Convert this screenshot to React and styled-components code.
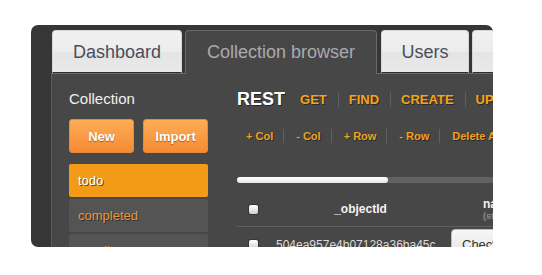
import React from "react";
import styled, { createGlobalStyle } from "styled-components";

const Global = createGlobalStyle`
  html, body { margin: 0; padding: 0; background: #ffffff; }
  body { font-family: "Liberation Sans", Arial, sans-serif; }
  * { box-sizing: border-box; }
`;

const Frame = styled.div`
  margin: 25px 0 0 31px;
  width: 462px;
  height: 222px;
  border-radius: 7px;
  overflow: hidden;
  background: #363636;
  padding-left: 20px;
  display: flex;
  flex-direction: column;
`;

const TabBar = styled.div`
  display: flex;
  align-items: flex-end;
  height: 48px;
  padding: 5px 0 0 1px;
  flex-shrink: 0;
`;

const Tab = styled.div`
  flex-shrink: 0;
  width: ${(p) => p.$w}px;
  margin-right: ${(p) => p.$gap}px;
  height: ${(p) => (p.$active ? 44 : 43)}px;
  margin-bottom: ${(p) => (p.$active ? -1 : 0)}px;
  position: relative;
  z-index: ${(p) => (p.$active ? 2 : 1)};
  border-radius: 4px 4px 0 0;
  font-size: 18px;
  line-height: 42px;
  text-align: ${(p) => (p.$pad ? "left" : "center")};
  padding-left: ${(p) => p.$pad || 0}px;
  white-space: nowrap;
  color: ${(p) => (p.$active ? "#a9aab1" : "#4a4e5b")};
  background: ${(p) =>
    p.$active
      ? "#474747"
      : "linear-gradient(#f1f1f1 0%, #ececec 50%, #e4e4e4 52%, #e9e9e9 100%)"};
  border: 1px solid ${(p) => (p.$active ? "#6a6a6a" : "#d6d6d6")};
  border-bottom: ${(p) => (p.$active ? "none" : "1px solid #2e2e2e")};
`;

const Panel = styled.div`
  flex: 1;
  min-height: 0;
  background: #474747;
  border-left: 1px solid #5b5b5b;
  border-top: 1px solid #6a6a6a;
  display: flex;
  gap: 29px;
  padding: 16px 0 0 17px;
`;

const Sidebar = styled.div`
  width: 139px;
  flex-shrink: 0;
  display: flex;
  flex-direction: column;
`;

const SideTitle = styled.div`
  font-size: 15px;
  line-height: 18px;
  color: #f0f0f0;
  margin-bottom: 11px;
`;

const ButtonRow = styled.div`
  display: flex;
  gap: 9px;
  margin-bottom: 11px;
`;

const OrangeButton = styled.button`
  width: 65px;
  height: 34px;
  border-radius: 3px;
  border: 1px solid #e88a3a;
  background: linear-gradient(#fdae57, #f68a34);
  color: #ffffff;
  font-family: "Liberation Sans", Arial, sans-serif;
  font-weight: bold;
  font-size: 13px;
  text-shadow: 0 1px 1px rgba(90, 40, 0, 0.55);
  padding: 0;
`;

const List = styled.div`
  display: flex;
  flex-direction: column;
  gap: 2px;
`;

const ListItem = styled.div`
  height: 33px;
  border-radius: 2px;
  padding-left: 9px;
  display: flex;
  align-items: center;
  font-size: 13px;
  background: ${(p) => (p.$active ? "#f39a16" : "#545454")};
  color: ${(p) => (p.$active ? "#ffffff" : "#eb9635")};
  text-shadow: 1px 1px 0 rgba(30, 30, 30, 0.7);
`;

const Main = styled.div`
  flex: 1;
  min-width: 0;
  display: flex;
  flex-direction: column;
  white-space: nowrap;
`;

const RestRow = styled.div`
  display: flex;
  align-items: center;
  height: 18px;
`;

const RestLabel = styled.span`
  font-size: 18px;
  font-weight: bold;
  color: #ffffff;
  text-shadow: 1px 1px 0 #262626;
  margin-right: 15px;
`;

const Method = styled.span`
  font-size: 13px;
  font-weight: bold;
  color: #f7a414;
  text-shadow: 1px 1px 0 #2a2a2a;
`;

const Sep = styled.span`
  flex-shrink: 0;
  width: 1px;
  height: ${(p) => p.$h}px;
  background: #606060;
  margin: 0 ${(p) => p.$r}px 0 ${(p) => p.$l}px;
`;

const ActionRow = styled.div`
  display: flex;
  align-items: center;
  height: 14px;
  margin-top: 21px;
  padding-left: 9px;
`;

const Action = styled.span`
  font-size: 11px;
  font-weight: bold;
  color: #f2a01c;
  text-shadow: 1px 1px 0 #2a2a2a;
`;

const Track = styled.div`
  margin-top: 34px;
  height: 6px;
  border-radius: 3px;
  background: #626262;
  width: 300px;
  flex-shrink: 0;
`;

const Fill = styled.div`
  height: 6px;
  border-radius: 3px;
  background: linear-gradient(#ffffff, #e6e6e6);
`;

const TableRow = styled.div`
  display: grid;
  grid-template-columns: 33px 181px 140px;
  align-items: center;
  height: ${(p) => p.$h}px;
  flex-shrink: 0;
  border-bottom: ${(p) => (p.$header ? "1px solid #5f5f5f" : "none")};
  margin-top: ${(p) => (p.$header ? 9 : 0)}px;
  width: 360px;
`;

const Box = styled.span`
  justify-self: center;
  width: 9px;
  height: 9px;
  border-radius: 2px;
  background: linear-gradient(#ffffff, #cfcfcf);
  box-shadow: 0 0 0 1px rgba(0, 0, 0, 0.25);
`;

const HeadCell = styled.div`
  font-size: 12px;
  font-weight: bold;
  color: #f2f2f2;
  text-align: ${(p) => (p.$center ? "center" : "left")};
  padding-left: ${(p) => p.$pad || 0}px;
  line-height: 14px;
`;

const TypeNote = styled.div`
  font-size: 9px;
  font-weight: bold;
  line-height: 11px;
  color: #8a8a8a;
`;

const IdCell = styled.div`
  font-size: 12px;
  color: #dcdcdc;
  padding-left: 6px;
  padding-top: 2px;
`;

const CheckButton = styled.button`
  justify-self: start;
  align-self: start;
  margin-top: 2px;
  height: 30px;
  padding: 0 10px;
  border-radius: 4px;
  border: 1px solid #bdbdbd;
  background: linear-gradient(#f6f6f6, #e4e4e4);
  color: #333;
  font-family: "Liberation Sans", Arial, sans-serif;
  font-size: 13px;
`;

const tabs = [
  { label: "Dashboard", w: 130, gap: 3 },
  { label: "Collection browser", w: 192, gap: 4, active: true },
  { label: "Users", w: 88, gap: 3 },
  { label: "Settings", w: 100, gap: 0, pad: 26 },
];

const methods = ["GET", "FIND", "CREATE", "UPDATE", "DELETE"];
const actions = ["+ Col", "- Col", "+ Row", "- Row", "Delete All"];
const collections = ["todo", "completed", "pending"];

export default function App() {
  return (
    <>
      <Global />
      <Frame>
        <TabBar>
          {tabs.map((t) => (
            <Tab key={t.label} $w={t.w} $gap={t.gap} $active={t.active} $pad={t.pad}>
              {t.label}
            </Tab>
          ))}
        </TabBar>
        <Panel>
          <Sidebar>
            <SideTitle>Collection</SideTitle>
            <ButtonRow>
              <OrangeButton>New</OrangeButton>
              <OrangeButton>Import</OrangeButton>
            </ButtonRow>
            <List>
              {collections.map((c, i) => (
                <ListItem key={c} $active={i === 0}>
                  {c}
                </ListItem>
              ))}
            </List>
          </Sidebar>
          <Main>
            <RestRow>
              <RestLabel>REST</RestLabel>
              {methods.map((m, i) => (
                <React.Fragment key={m}>
                  {i > 0 && <Sep $h={15} $l={11} $r={10} />}
                  <Method>{m}</Method>
                </React.Fragment>
              ))}
            </RestRow>
            <ActionRow>
              {actions.map((a, i) => (
                <React.Fragment key={a}>
                  {i > 0 && <Sep $h={14} $l={10} $r={12} />}
                  <Action>{a}</Action>
                </React.Fragment>
              ))}
            </ActionRow>
            <Track>
              <Fill style={{ width: "151px" }} />
            </Track>
            <TableRow $header $h={35}>
              <Box />
              <HeadCell $center>_objectId</HeadCell>
              <HeadCell $pad={32}>
                name
                <TypeNote>(string)</TypeNote>
              </HeadCell>
            </TableRow>
            <TableRow $h={34}>
              <Box />
              <IdCell>504ea957e4b07128a36ba45c</IdCell>
              <CheckButton>Check</CheckButton>
            </TableRow>
          </Main>
        </Panel>
      </Frame>
    </>
  );
}
